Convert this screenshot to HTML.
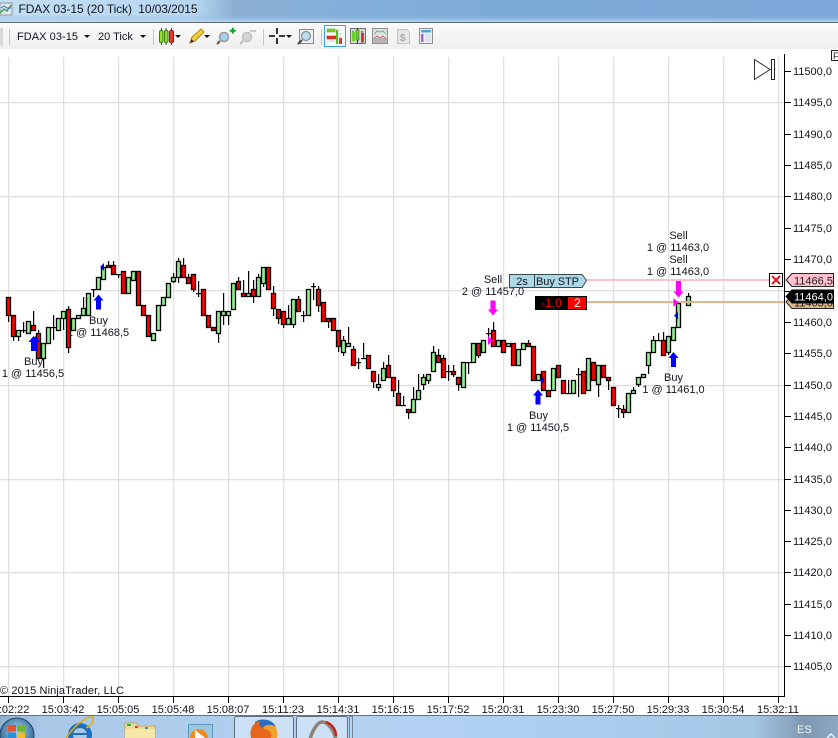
<!DOCTYPE html>
<html>
<head>
<meta charset="utf-8">
<title>FDAX 03-15 (20 Tick) 10/03/2015</title>
<style>
html,body{margin:0;padding:0;background:#fff;overflow:hidden;width:838px;height:738px}
svg{display:block;position:absolute;left:0;top:0}
text{font-family:"Liberation Sans",sans-serif;font-size:11px;fill:#14141e;white-space:pre}
</style>
</head>
<body>
<svg xmlns="http://www.w3.org/2000/svg" width="838" height="738" viewBox="0 0 838 738">
<defs>
<linearGradient id="tv" x1="0" y1="0" x2="0" y2="1"><stop offset="0" stop-color="#7aa9d8" stop-opacity=".0"/><stop offset=".65" stop-color="#7aa9d8" stop-opacity="0"/><stop offset="1" stop-color="#bcdcf5" stop-opacity=".85"/></linearGradient>
<linearGradient id="th" x1="0" y1="0" x2="1" y2="0"><stop offset="0" stop-color="#c2def2"/><stop offset=".23" stop-color="#b8d8f2"/><stop offset=".28" stop-color="#8db0d2"/><stop offset=".37" stop-color="#86b0da"/><stop offset=".6" stop-color="#7caad9"/><stop offset="1" stop-color="#7ba8d8"/></linearGradient>
<linearGradient id="tb" x1="0" y1="0" x2="0" y2="1"><stop offset="0" stop-color="#fbfbfb"/><stop offset="1" stop-color="#efefef"/></linearGradient>
<linearGradient id="task" x1="0" y1="0" x2="1" y2="0"><stop offset="0" stop-color="#8fb0cf"/><stop offset=".05" stop-color="#a9c7e6"/><stop offset=".4" stop-color="#b3d1f1"/><stop offset=".6" stop-color="#b0d0f2"/><stop offset=".9" stop-color="#a6c6e6"/><stop offset=".96" stop-color="#7f98b2"/><stop offset="1" stop-color="#8ea8c2"/></linearGradient>
<radialGradient id="orb" cx=".5" cy=".4" r=".6"><stop offset="0" stop-color="#a9d4ee"/><stop offset="1" stop-color="#23608f"/></radialGradient>
</defs>

<!-- title bar -->
<rect x="0" y="0" width="838" height="22" fill="url(#th)"/>
<rect x="0" y="0" width="838" height="22" fill="url(#tv)"/>
<rect x="0" y="22" width="838" height="1" fill="#5f6a73"/>
<rect x="0" y="3" width="12" height="12" fill="#dfe8ef" stroke="#8a97a5"/>
<path d="M0 13L4 9L7 11L11 5" fill="none" stroke="#2e9a4c" stroke-width="1.3"/>
<path d="M1 8L4 6L7 8L11 8" fill="none" stroke="#3a6fc4" stroke-width="1"/>
<text x="18.500" y="13" style="font-size:12px" textLength="179" lengthAdjust="spacing">FDAX 03-15 (20 Tick)  10/03/2015</text>

<!-- toolbar -->
<rect x="0" y="23" width="838" height="26" fill="url(#tb)"/>
<rect x="0" y="28" width="3" height="18" fill="#d8d8d8"/>
<rect x="9" y="29" width="1" height="16" fill="#c4c4c4"/>
<text x="17" y="40" textLength="61">FDAX 03-15</text>
<path d="M84 35h6l-3 3z" fill="#111"/>
<text x="98" y="40">20 Tick</text>
<path d="M140 35h6l-3 3z" fill="#111"/>
<rect x="153" y="29" width="1" height="16" fill="#c4c4c4"/>
<path d="M161.500 28v17M166 28v17M171.500 28v17" stroke="#444"/>
<rect x="159.500" y="30.500" width="3.500" height="12" rx="1.500" fill="#8be030" stroke="#3f7a10"/>
<rect x="164.500" y="30.500" width="3.500" height="12" rx="1.500" fill="#8be030" stroke="#3f7a10"/>
<rect x="169.500" y="30.500" width="4" height="12" rx="1.500" fill="#e63a30" stroke="#8a1a12"/>
<path d="M175 35h6l-3 3z" fill="#111"/>
<path d="M190 43l2-6L201 29l3 3-9 9z" fill="#f6cf3a" stroke="#a88318"/>
<path d="M190 43l1.500-4 2.500 2.500z" fill="#333"/>
<path d="M204 35h6l-3 3z" fill="#111"/>
<circle cx="224" cy="37" r="4.500" fill="#a8d0ea" stroke="#9a9a9a" stroke-width="1.500"/>
<path d="M220 41l-3 3" stroke="#555" stroke-width="2"/>
<path d="M230 30h2v-2h1.500v2h2v1.500h-2v2h-1.500v-2h-2z" fill="#12a030" stroke="#12a030" stroke-width=".5"/>
<circle cx="247" cy="37" r="4.500" fill="#d4d4d4" stroke="#c0c0c0" stroke-width="1.500"/>
<path d="M243 41l-3 3" stroke="#bbb" stroke-width="2"/>
<path d="M250 31h6" stroke="#bdbdbd" stroke-width="1.500"/>
<rect x="263" y="29" width="1" height="16" fill="#c4c4c4"/>
<path d="M269 36h6M279 36h6M277 28v6M277 38v6" stroke="#000" stroke-width="1.600"/>
<path d="M286 35h6l-3 3z" fill="#111"/>
<rect x="299.500" y="29.500" width="14" height="14" fill="#eee" stroke="#8a8a8a"/>
<circle cx="306" cy="36" r="4.500" fill="#bcdcf0" stroke="#7f8f9a" stroke-width="1.200"/>
<path d="M302 40l-4 4" stroke="#444" stroke-width="2"/>
<rect x="321" y="29" width="1" height="16" fill="#c4c4c4"/>
<rect x="324.500" y="25.500" width="21" height="21" fill="#f6f9fc" stroke="#3a9af0"/>
<path d="M330 30h10M336 34h5M336 37h5M330 41h5" stroke="#c8c8c8"/>
<rect x="327" y="29" width="8" height="3" fill="#7ed321" stroke="#4f9a10" stroke-width=".5"/>
<rect x="327" y="36" width="9" height="3" fill="#e8322a" stroke="#a01a12" stroke-width=".5"/>
<rect x="336" y="30" width="2" height="14" fill="#4fbf20"/>
<rect x="339" y="38" width="3" height="6" fill="#d24030"/>
<rect x="350.500" y="28.500" width="15" height="15" fill="#d8d8d8" stroke="#707070"/>
<path d="M357.500 28v16M362 31v12M353 31v10" stroke="#333"/>
<rect x="352" y="32" width="3" height="9" fill="#6fd030"/>
<rect x="356" y="30" width="3" height="10" fill="#6fd030" stroke="#333" stroke-width=".4"/>
<rect x="361" y="33" width="3" height="9" fill="#d8352a"/>
<rect x="372.500" y="28.500" width="15" height="15" fill="#e2e2e2" stroke="#8f8f8f"/>
<rect x="373" y="38" width="14" height="5" fill="#b5b5b5"/>
<path d="M374 34l3-3 3 1 3-1 3 3" fill="none" stroke="#5fbf80"/>
<path d="M374 38l3-2 3 2 3-2 3 3" fill="none" stroke="#e06070"/>
<path d="M397.500 29.500h9l3 3v11h-12z" fill="#e6e6e6" stroke="#c2c2c2"/>
<text x="400" y="41" style="font-size:10px;font-weight:bold;fill:#a8a8a8">$</text>
<rect x="419.500" y="28.500" width="13" height="15" fill="#eef2f8" stroke="#909090"/>
<rect x="421" y="30" width="10" height="2.500" fill="#4aa3dc"/>
<rect x="421" y="34" width="2.500" height="8" fill="#a060e8"/>
<path d="M425 35h6M425 37h6M425 39h6M425 41h6" stroke="#c9d4e0"/>

<!-- chart bg -->
<rect x="0" y="49" width="838" height="667" fill="#fff"/>

<g id="grid"></g>

<!-- axis labels -->
<g id="ytext">
<text x="793" y="75">11500,0</text>
<text x="793" y="106">11495,0</text>
<text x="793" y="138">11490,0</text>
<text x="793" y="169">11485,0</text>
<text x="793" y="200">11480,0</text>
<text x="793" y="232">11475,0</text>
<text x="793" y="263">11470,0</text>
<text x="793" y="326">11460,0</text>
<text x="793" y="357">11455,0</text>
<text x="793" y="389">11450,0</text>
<text x="793" y="420">11445,0</text>
<text x="793" y="451">11440,0</text>
<text x="793" y="483">11435,0</text>
<text x="793" y="514">11430,0</text>
<text x="793" y="545">11425,0</text>
<text x="793" y="576">11420,0</text>
<text x="793" y="608">11415,0</text>
<text x="793" y="639">11410,0</text>
<text x="793" y="670">11405,0</text>
</g>
<g text-anchor="middle">
<text x="8" y="713">15:02:22</text>
<text x="63" y="713">15:03:42</text>
<text x="118" y="713">15:05:05</text>
<text x="173" y="713">15:05:48</text>
<text x="228" y="713">15:08:07</text>
<text x="283" y="713">15:11:23</text>
<text x="338" y="713">15:14:31</text>
<text x="393" y="713">15:16:15</text>
<text x="448" y="713">15:17:52</text>
<text x="503" y="713">15:20:31</text>
<text x="558" y="713">15:23:30</text>
<text x="613" y="713">15:27:50</text>
<text x="668" y="713">15:29:33</text>
<text x="723" y="713">15:30:54</text>
<text x="778" y="713">15:32:11</text>
</g>
<text x="0" y="694" textLength="124">© 2015 NinjaTrader, LLC</text>

<!-- execution text -->
<g text-anchor="middle">
<text x="33.500" y="365">Buy</text>
<text x="33" y="377">1 @ 11456,5</text>
<text x="98.500" y="324">Buy</text>
<text x="98" y="336">1 @ 11468,5</text>
<text x="493" y="283">Sell</text>
<text x="493" y="295">2 @ 11457,0</text>
<text x="538.500" y="419">Buy</text>
<text x="538" y="431">1 @ 11450,5</text>
<text x="673.500" y="381">Buy</text>
<text x="673.500" y="393">1 @ 11461,0</text>
<text x="678.500" y="239">Sell</text>
<text x="678" y="251">1 @ 11463,0</text>
<text x="678.500" y="263">Sell</text>
<text x="678" y="275">1 @ 11463,0</text>
</g>

<g id="candles"></g>

<!-- order lines -->
<rect x="586" y="279" width="184" height="2" fill="#ffc0cb"/>
<rect x="586" y="301" width="198" height="2" fill="#deb887"/>

<!-- arrows -->
<g id="arrows">
<path d="M28.500 342L33.500 336L38.500 342H36V351H31V342z" fill="#0000ff"/>
<path d="M30.500 342L35.500 336L40.500 342H38V351H33V342z" fill="#0000ff"/>
<path d="M93.500 300.500L98.500 294.500L103.500 300.500H101V309.500H96V300.500z" fill="#0000ff"/>
<path d="M533 395.500L538 389.500L543 395.500H540.500V404.500H535.500V395.500z" fill="#0000ff"/>
<path d="M668.500 358L673.500 352L678.500 358H676V367H671V358z" fill="#0000ff"/>
<path d="M100 267L104 263V271z" fill="#0000ff"/>
<path d="M540 380L544 376V384z" fill="#0000ff"/>
<path d="M674 315.500L678 312V319.500z" fill="#0000ff"/>
<path d="M488 309.500L493 315.500L498 309.500H495.500V300.500H490.500V309.500z" fill="#ff00ff"/>
<path d="M673.500 291.500L678.500 297.500L683.500 291.500H681V281H676V291.500z" fill="#ff00ff"/>
<path d="M488 336L493 340.500L488 345z" fill="#ff00ff"/>
<path d="M673.500 298L678.500 302.500L673.500 307z" fill="#ff00ff"/>
</g>

<!-- buy stp chip -->
<path d="M509.500 274.500H582L586.500 280.500L582 287.500H509.500z" fill="#add8e6" stroke="#3a4a50"/>
<path d="M534.500 274.500V287.500" stroke="#3a4a50"/>
<text x="522" y="285" text-anchor="middle">2s</text>
<text x="536" y="285" textLength="43">Buy STP</text>

<!-- position chip -->
<rect x="535" y="296" width="33" height="14" fill="#000"/>
<rect x="568" y="296" width="19" height="14" fill="#ff0000"/>
<rect x="535.500" y="296.500" width="51" height="13" fill="none" stroke="#000"/>
<text x="551.500" y="307" text-anchor="middle" style="font-size:12px;fill:#ff0000">-1,0</text>
<text x="577.500" y="307" text-anchor="middle" style="font-size:12px;fill:#fff">2</text>

<!-- close X -->
<rect x="769.500" y="273.500" width="13" height="13" fill="#fff" stroke="#000"/>
<path d="M772 276L780 284M780 276L772 284" stroke="#e8141c" stroke-width="2"/>

<!-- axes -->
<rect x="784" y="54" width="1" height="642" fill="#000"/>
<rect x="0" y="696" width="785" height="1" fill="#000"/>
<g id="ticks"></g>

<!-- price tags -->
<path d="M786 280L792 273.500H833.500V286.500H792z" fill="#ffc0cb" stroke="#222"/>
<text x="794" y="284.500" style="fill:#222">11466,5</text>
<path d="M786 302L792 295.500H833.500V308.500H792z" fill="#deb887" stroke="#222"/>
<text x="794" y="306.500" style="fill:#222">11463,0</text>
<path d="M786 296.500L792 290H833.500V303H792z" fill="#000" stroke="#000"/>
<text x="794" y="300.500" style="fill:#fff">11464,0</text>

<!-- play / bar -->
<path d="M754.500 59.500V79.500L770 69.500z" fill="#fff" stroke="#333"/>
<rect x="771.500" y="59.500" width="3" height="20" fill="#fff" stroke="#222"/>
<rect x="831.500" y="50.500" width="8" height="10" fill="#fff" stroke="#222"/>
<text x="833" y="59" style="font-size:9px">F</text>

<!-- bottom strip -->
<rect x="0" y="715" width="838" height="1" fill="#6b7278"/>
<rect x="0" y="716" width="838" height="22" fill="url(#task)"/>
<!-- orb -->
<circle cx="17" cy="735" r="17" fill="url(#orb)" stroke="#1d4468"/>
<rect x="8" y="725" width="8" height="6.500" fill="#e8512b"/>
<rect x="17" y="725" width="8" height="6.500" fill="#75b72c"/>
<rect x="8" y="732.500" width="8" height="6" fill="#2c8fd8"/>
<rect x="17" y="732.500" width="8" height="6" fill="#f2bd2c"/>
<!-- IE -->
<circle cx="80" cy="735" r="9.500" fill="none" stroke="#1d6fc0" stroke-width="5"/>
<path d="M72 734H89" stroke="#1d6fc0" stroke-width="2"/>
<path d="M66 738C74 726 86 716 93 717C94 722 90 726 86 728" fill="none" stroke="#e3a81e" stroke-width="1.500"/>
<!-- folder -->
<path d="M125 723h11l3 3h16v12h-30z" fill="#f0dc9a" stroke="#c9a95c"/>
<rect x="127" y="724" width="4" height="2" fill="#2fb040"/>
<rect x="135" y="726" width="3" height="2" fill="#d84030"/>
<rect x="145" y="727" width="3" height="2" fill="#2c8fd8"/>
<path d="M125 729h30v9h-30z" fill="#f6e6a8"/>
<!-- media -->
<rect x="188.500" y="724.500" width="24" height="14" fill="#9fc6df" stroke="#5b9ac0"/>
<circle cx="199" cy="738" r="9" fill="#f08a1e"/>
<path d="M195 730L205 738L195 746z" fill="#fff"/>
<!-- buttons -->
<rect x="234.500" y="716.500" width="59" height="24" rx="2" fill="#d8e8f8" fill-opacity=".7" stroke="#5f6f80"/>
<rect x="296.500" y="716.500" width="51" height="24" rx="2" fill="#d8e8f8" fill-opacity=".7" stroke="#5f6f80"/>
<rect x="349.500" y="716.500" width="3" height="24" fill="#c6dcf3" fill-opacity=".5" stroke="#6e8298"/>
<circle cx="264" cy="734" r="13.500" fill="#f0a030"/>
<path d="M255 722C260 718 272 718 276 727C270 723 262 725 262 731L255 730z" fill="#2b6dbf"/>
<path d="M251 738C249 728 254 722 260 721C257 726 262 728 268 730C273 733 271 738 270 740H251z" fill="#e8661c"/>
<path d="M310 740C312 730 318 722 322 722C328 722 334 730 336 740" fill="none" stroke="#8f8377" stroke-width="3.500"/>
<path d="M326 722C332 724 336 730 336 736" fill="none" stroke="#c8221c" stroke-width="2.500"/>
<text x="797" y="733" style="font-size:11px;fill:#eef4fa">ES</text>
<path d="M827 738L831 734L835 738" fill="none" stroke="#eef4fa" stroke-width="1.500"/>
</svg>

<script>
(function(){
var NS="http://www.w3.org/2000/svg";
function el(p,n,a){var e=document.createElementNS(NS,n);for(var k in a)e.setAttribute(k,a[k]);document.getElementById(p).appendChild(e);return e;}
var i,x,y;
var gx=[8,63,118,173,228,283,338,393,448,503,558,613,668,723,778];
for(i=0;i<gx.length;i++){
  el("grid","rect",{x:gx[i],y:57,width:1.3,height:639,fill:"#e0e0e0"});
  el("ticks","rect",{x:gx[i],y:697,width:1,height:6,fill:"#000"});
}
var gy=[102,196,290,385,479,572,666];
for(i=0;i<gy.length;i++){el("grid","rect",{x:0,y:gy[i],width:784,height:1.3,fill:"#e0e0e0"});}
var ly=[71,102,134,165,196,228,259,291,322,353,385,416,447,479,510,541,572,604,635,666];
for(i=0;i<ly.length;i++){el("ticks","rect",{x:785,y:ly[i],width:6,height:1,fill:"#000"});}
/* zx, type, top, bottom, hi, lo  (zoomed 3x coords) */
var A=[[25,'r',140,196,140,215],[40,'r',196,258,196,272],[55,'g',240,258,240,272],[70,'d',240,240,215,250],[85,'g',214,250,214,250],[100,'r',224,240,184,240],[115,'r',250,325,240,325],[130,'g',280,325,280,355],[145,'g',232,280],[160,'d',232,232,195,270],[175,'g',205,241],[190,'g',184,205,184,240],[205,'r',176,290,168,308],[220,'g',205,240],[235,'g',196,205],[250,'g',175,196,140,196],[265,'g',130,196],[280,'d',118,118,118,140],[295,'g',82,118],[310,'g',50,88],[325,'r',44,52,32,52],[340,'r',44,72,32,72],[355,'d',72,72,72,84],[370,'r',64,130],[385,'g',82,130],[400,'g',64,90],[415,'r',64,166],[430,'r',166,196],[445,'r',196,258],[460,'g',250,270],[475,'g',166,241],[490,'g',140,166],[505,'g',100,140],[520,'g',82,92,70,100],[535,'g',34,82,25,100],[550,'r',44,82,25,82],[565,'r',82,100,72,100],[580,'r',72,118,72,125],[595,'d',130,130,92,140],[610,'r',118,196],[625,'r',196,232],[640,'r',232,240],[655,'g',184,250,184,280],[670,'g',184,196,128,225],[685,'g',184,196,184,225],[700,'g',100,176]];
var B=[[25,'r',92,118,82,118],[40,'r',130,138,90,138],[55,'g',130,138,64,138],[70,'r',118,138,90,158],[85,'g',82,138,72,138],[100,'g',52,100,52,110],[115,'r',52,118],[130,'r',130,175,108,197],[145,'r',176,205,176,223],[160,'r',184,223,184,233],[175,'g',205,223,165,223],[190,'g',148,223,148,233],[205,'r',148,184,138,184],[220,'d',196,196,184,215],[235,'g',118,196],[250,'d',108,108,100,150],[265,'r',118,166,108,185],[280,'r',157,214],[295,'r',205,214,205,233],[310,'r',205,241],[325,'r',241,289,241,307],[340,'g',271,307,258,317],[355,'g',280,289,232,289],[370,'r',298,346,289,346],[385,'d',337,337,325,356],[400,'d',325,325,280,325],[415,'r',316,355],[430,'r',364,392,364,413],[445,'g',403,412,373,422],[460,'g',355,391,337,391],[475,'r',346,382,316,382],[490,'r',382,421,382,440],[505,'r',430,466,390,466],[520,'d',466,466,438,466],[535,'r',478,487,478,506],[550,'g',448,487,412,487],[565,'g',421,448,373,448],[580,'g',382,403,373,421],[595,'g',373,391,373,403],[610,'g',307,364,289,364],[625,'r',316,337,298,337],[640,'r',325,382,316,382],[655,'d',364,364,346,392],[670,'r',364,373,346,382]];
var C=[[25,'r',322,343,322,362],[40,'g',277,352],[55,'d',277,277,277,313],[70,'g',220,277],[85,'r',220,256,220,265],[100,'g',211,247],[115,'d',190,190,175,220],[130,'r',181,229,155,229],[145,'g',211,229],[160,'r',211,247],[175,'g',220,229],[190,'r',220,286],[205,'g',238,286],[220,'g',220,238],[235,'r',220,229,211,229],[250,'r',229,331],[265,'g',313,331],[280,'r',304,361],[295,'r',361,379],[310,'g',295,361],[325,'r',286,322],[340,'r',331,370],[355,'d',370,370,331,370],[370,'g',331,370],[385,'d',313,313,295,380],[400,'r',304,370],[415,'g',265,361],[430,'r',277,331],[445,'g',286,343,286,380],[460,'r',286,322],[475,'r',322,331,322,360],[490,'r',352,406],[505,'d',415,415,406,445],[520,'r',418,427,406,445],[535,'g',370,427],[550,'g',361,370,352,370],[565,'g',322,343,322,352],[580,'g',313,322],[595,'g',247,286,247,313],[610,'g',211,247,197,247],[625,'d',211,211,190,211],[640,'r',211,256,186,256],[655,'g',199,247,199,255],[670,'g',172,211],[685,'g',100,172],[714,'g',79,106,70,106]];
function draw(L,ox,oy){
  L.forEach(function(c){
    var cx=Math.floor(ox+c[0]/3),
        t=Math.round(oy+c[2]/3),b=Math.round(oy+c[3]/3),
        hi=c[4]===undefined?t:Math.round(oy+c[4]/3),
        lo=c[5]===undefined?b:Math.round(oy+c[5]/3);
    if(hi<t||lo>b||c[1]=='d'){el("candles","rect",{x:cx,y:hi,width:1.2,height:Math.max(lo-hi,1),fill:"#000"});}
    if(c[1]=='d'){el("candles","rect",{x:cx-2,y:t,width:5,height:1.2,fill:"#000"});}
    else{el("candles","rect",{x:cx-2+.5,y:t+.5,width:4,height:Math.max(b-t,2),fill:c[1]=='g'?"#90ee90":"#ff0000",stroke:"#000","stroke-width":1.3});}
  });
}
draw(A,0,250);draw(B,230,250);draw(C,450,270);
})();
</script>
</body>
</html>
